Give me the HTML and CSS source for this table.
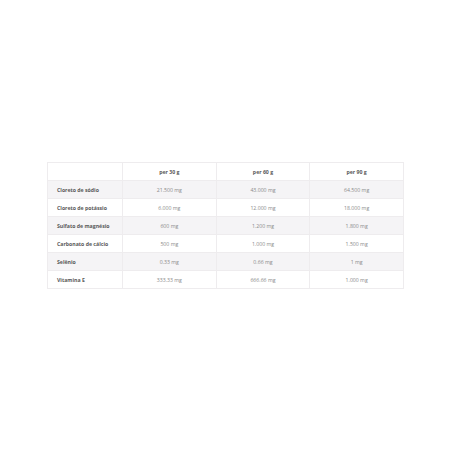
FILE: index.html
```html
<!DOCTYPE html>
<html>
<head>
<meta charset="utf-8">
<link rel="stylesheet" href="styles.css">
</head>
<body>
<div class="page">
<table class="nutri">
<thead>
<tr><th class="label"></th><th>per 30 g</th><th>per 60 g</th><th>per 90 g</th></tr>
</thead>
<tbody>
<tr class="alt"><td class="label">Cloreto de sódio</td><td>21.500 mg</td><td>43.000 mg</td><td>64.500 mg</td></tr>
<tr><td class="label">Cloreto de potássio</td><td>6.000 mg</td><td>12.000 mg</td><td>18.000 mg</td></tr>
<tr class="alt"><td class="label">Sulfato de magnésio</td><td>600 mg</td><td>1.200 mg</td><td>1.800 mg</td></tr>
<tr><td class="label">Carbonato de cálcio</td><td>500 mg</td><td>1.000 mg</td><td>1.500 mg</td></tr>
<tr class="alt"><td class="label">Selênio</td><td>0.33 mg</td><td>0.66 mg</td><td>1 mg</td></tr>
<tr><td class="label">Vitamina E</td><td>333.33 mg</td><td>666.66 mg</td><td>1.000 mg</td></tr>
</tbody>
</table>
</div>
</body>
</html>
```
FILE: styles.css
```css
html, body { margin: 0; padding: 0; background: #fff; }
.page { padding: 162px 0 0 47px; }
.nutri {
  border-collapse: collapse;
  width: 357px;
  table-layout: fixed;
  font-family: "Open Sans", "Liberation Sans", sans-serif;
  font-size: 5.2px;
  color: #8a8a8a;
}
.nutri th, .nutri td {
  border: 1px solid #eeecee;
  height: 18px;
  padding: 0;
  text-align: center;
  vertical-align: middle;
  box-sizing: border-box;
}
.nutri th { font-weight: 700; color: #5a5a5a; }
.nutri th.label { width: 75px; }
.nutri td.label { text-align: left; padding-left: 9px; font-weight: 700; color: #5a5a5a; }
.nutri tr.alt td { background: #f5f4f6; }
```
